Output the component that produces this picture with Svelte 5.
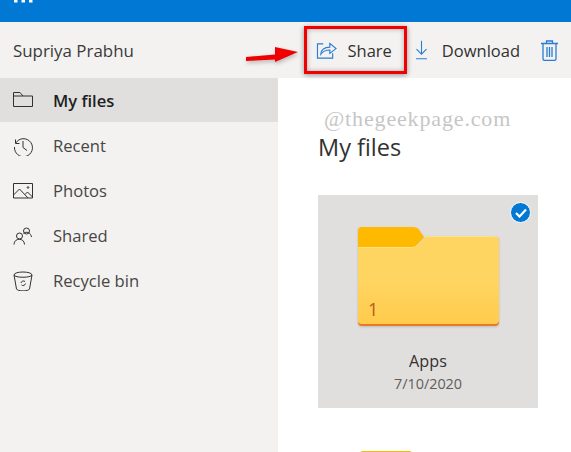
<script>
  const navItems = [
    { name: "My files", icon: "folder", active: true },
    { name: "Recent", icon: "recent" },
    { name: "Photos", icon: "photos" },
    { name: "Shared", icon: "shared" },
    { name: "Recycle bin", icon: "bin" }
  ];
</script>

{#snippet folderShape()}
  <svg class="folder" viewBox="0 0 141 99" width="141" height="99">
    <defs>
      <linearGradient id="front" x1="0" y1="0" x2="0" y2="1">
        <stop offset="0.5" stop-color="#ffd561" />
        <stop offset="1" stop-color="#ffcb4c" />
      </linearGradient>
    </defs>
    <path d="M0 34V4q0-4 4-4h51q3 0 5 1.500L66 10 55 22 4 34z" fill="#ffb900" />
    <path d="M0 95V21h54q3 0 5-2l9-9h69q4 0 4 4v81q0 4-4 4H4q-4 0-4-4z" fill="#e8792a" />
    <path d="M0 94V20.500h54q3 0 5-2l9-9h69q4 0 4 4V93q0 4-4 4H4q-4 0-4-3z" fill="url(#front)" />
    <path d="M0 20.500h54q3 0 5-2l9-9h69" fill="none" stroke="#ffe594" stroke-width="0.800" />
  </svg>
{/snippet}

<div class="page">
  <header class="topbar">
    <svg class="waffle" width="20" height="3" viewBox="0 0 20 3">
      <rect x="0" y="0" width="3.500" height="2.500" />
      <rect x="7.500" y="0" width="3.500" height="2.500" />
      <rect x="15" y="0" width="3.500" height="2.500" />
    </svg>
  </header>

  <div class="toolbar">
    <div class="user">Supriya Prabhu</div>
    <div class="actions">
      <button class="action share">
        <svg width="21" height="19" viewBox="0 0 22 20" fill="none" stroke="#2b7cd3" stroke-width="1.200">
          <path d="M7.500 3H1.500v15h16v-5" />
          <path d="M5 14c0-5 4-7.500 9.500-7.500V2.500L21 8l-6.500 5V9.500C10 9.500 7 11 5 14z" />
        </svg>
        Share
      </button>
      <button class="action download">
        <svg width="13" height="20" viewBox="0 0 14 24" fill="none" stroke="#2b7cd3" stroke-width="1.300">
          <path d="M7 1v16M1 11l6 6 6-6M0.500 22.500h13" />
        </svg>
        Download
      </button>
      <button class="action trash" aria-label="Delete">
        <svg width="17" height="21" viewBox="0 0 17 21" fill="none" stroke="#2b7cd3" stroke-width="1.300">
          <path d="M0 3.500h17M5.500 3.500V1h6v2.500M2 3.500v15.500q0 1.300 1.300 1.300h10.400q1.300 0 1.300-1.300V3.500M6 7v10M8.500 7v10M11 7v10" />
        </svg>
      </button>
    </div>
  </div>

  <div class="body">
    <nav class="sidebar">
      {#each navItems as item}
        <div class="nav-item" class:active={item.active}>
          <svg class="nav-icon" width="20" height="20" viewBox="0 0 20 20" fill="none" stroke="#323130" stroke-width="1">
            {#if item.icon === "folder"}
              <path d="M0.500 16.500V2.500h6.500l3 3.500h9.500v10.500zM0.500 6h9.500" />
            {:else if item.icon === "recent"}
              <path d="M2.500 3.500v4h4M2.800 7a9 9 0 1 1-1.300 4M10 5v6.500l4 3" />
            {:else if item.icon === "photos"}
              <path d="M0.500 2.500h19v14.500H0.500zM0.500 14l6-6 8.500 9M12 13.500l2.500-2.500 5 5" />
              <circle cx="15" cy="6.500" r="0.800" />
            {:else if item.icon === "shared"}
              <circle cx="13.500" cy="5" r="3" />
              <circle cx="6.500" cy="10" r="3" />
              <path d="M1 18.500c0-7 10.500-7 10.500 0M10.500 7.500c1-1.500 5.500-2 7 1 .5 1 1 1.500 1 2.500" />
            {:else}
              <path d="M1 4c0-4 18-4 18 0l-2.500 14c-1 2.500-12 2.500-13 0zM1 4c1 3 17 3 18 0" />
              <path d="M8 12a2.500 2.500 0 0 1 4-1.500M12.500 12.500a2.500 2.500 0 0 1-4 1.500" />
            {/if}
          </svg>
          <span>{item.name}</span>
        </div>
      {/each}
    </nav>

    <main class="content">
      <h1>My files</h1>
      <div class="tile">
        {@render folderShape()}
        <span class="count">1</span>
        <span class="check">
          <svg width="12" height="10" viewBox="0 0 12 10" fill="none" stroke="#fff" stroke-width="2.200">
            <path d="M1 5l3.500 3.500L11 1.500" />
          </svg>
        </span>
        <div class="tile-name">Apps</div>
        <div class="tile-date">7/10/2020</div>
      </div>
      <div class="next-tab"></div>
    </main>
  </div>

  <!-- annotations sitting on top of the screenshot -->
  <div class="red-box"></div>
  <svg class="arrow" width="60" height="24" viewBox="0 0 60 24">
    <path d="M1 13L30 10.500V3L53 8 30 18V15.500L1 17z" fill="#f00000" />
  </svg>
  <div class="watermark">@thegeekpage.com</div>
</div>

<style>
  :global(body) {
    margin: 0;
    background: #fff;
  }

  .page {
    position: relative;
    width: 571px;
    height: 452px;
    overflow: hidden;
    font-family: "Open Sans", "Noto Sans", sans-serif;
    color: #323130;
  }

  .topbar {
    height: 22px;
    background: #0078d4;
  }

  .waffle {
    display: block;
    margin-left: 14px;
    fill: #fff;
  }

  .toolbar {
    display: flex;
    align-items: center;
    justify-content: space-between;
    height: 56px;
    background: #f3f2f1;
    padding: 0 13px;
  }

  .user {
    font-size: 16.900px;
    font-weight: 500;
    color: #3b3a39;
  }

  .actions {
    display: flex;
    align-items: center;
  }

  .action {
    display: flex;
    align-items: center;
    padding: 0;
    border: none;
    background: none;
    font: inherit;
    font-size: 16.500px;
    color: #323130;
  }

  .share {
    gap: 10px;
    margin-right: 23px;
  }

  .download {
    gap: 14px;
    margin-right: 21px;
  }

  .body {
    display: flex;
    height: 374px;
  }

  .sidebar {
    width: 278px;
    flex: none;
    background: #f3f2f1;
  }

  .nav-item {
    display: flex;
    align-items: center;
    gap: 20px;
    height: 45px;
    padding-left: 13px;
    font-size: 16.600px;
    color: #484644;
  }

  .nav-item.active {
    height: 44px;
    margin-bottom: 1px;
    background: #e1dfdd;
    color: #201f1e;
    font-weight: 600;
  }

  .nav-icon {
    flex: none;
  }

  .content {
    flex: 1;
    padding-left: 40px;
  }

  h1 {
    margin: 52px 0 30px;
    height: 35px;
    line-height: 35px;
    font-size: 23.500px;
    font-weight: 500;
    color: #323130;
  }

  .tile {
    position: relative;
    display: flex;
    flex-direction: column;
    align-items: center;
    box-sizing: border-box;
    width: 220px;
    height: 213px;
    padding-top: 32px;
    background: #e1dfdd;
  }

  .folder {
    display: block;
    filter: drop-shadow(0 1px 1px rgba(0, 0, 0, 0.15));
  }

  .count {
    position: absolute;
    left: 50px;
    top: 102px;
    font-size: 18px;
    color: #b7591c;
  }

  .check {
    position: absolute;
    right: 7px;
    top: 7px;
    display: flex;
    align-items: center;
    justify-content: center;
    width: 19px;
    height: 19px;
    border: 1.500px solid #fff;
    border-radius: 50%;
    background: #0078d4;
  }

  .tile-name {
    margin-top: 24px;
    font-size: 16.200px;
    line-height: 22px;
    color: #323130;
  }

  .tile-date {
    margin-top: 1px;
    font-size: 14.400px;
    line-height: 22px;
    color: #605e5c;
  }

  .next-tab {
    width: 52px;
    height: 3px;
    margin: 43px 0 0 42px;
    background: #ffb900;
    border-radius: 3px 3px 0 0;
  }

  .red-box {
    position: absolute;
    left: 304px;
    top: 26px;
    width: 97px;
    height: 42px;
    border: 3px solid #f00000;
    box-shadow: 0 1px 5px rgba(0, 0, 0, 0.4), inset 0 0 5px rgba(0, 0, 0, 0.3);
  }

  .arrow {
    position: absolute;
    left: 245px;
    top: 44px;
    filter: drop-shadow(1px 2px 2px rgba(0, 0, 0, 0.25));
  }

  .watermark {
    position: absolute;
    left: 324px;
    top: 106px;
    font-family: "Liberation Serif", serif;
    font-size: 22px;
    letter-spacing: 0.850px;
    color: #c6c6c6;
  }
</style>
